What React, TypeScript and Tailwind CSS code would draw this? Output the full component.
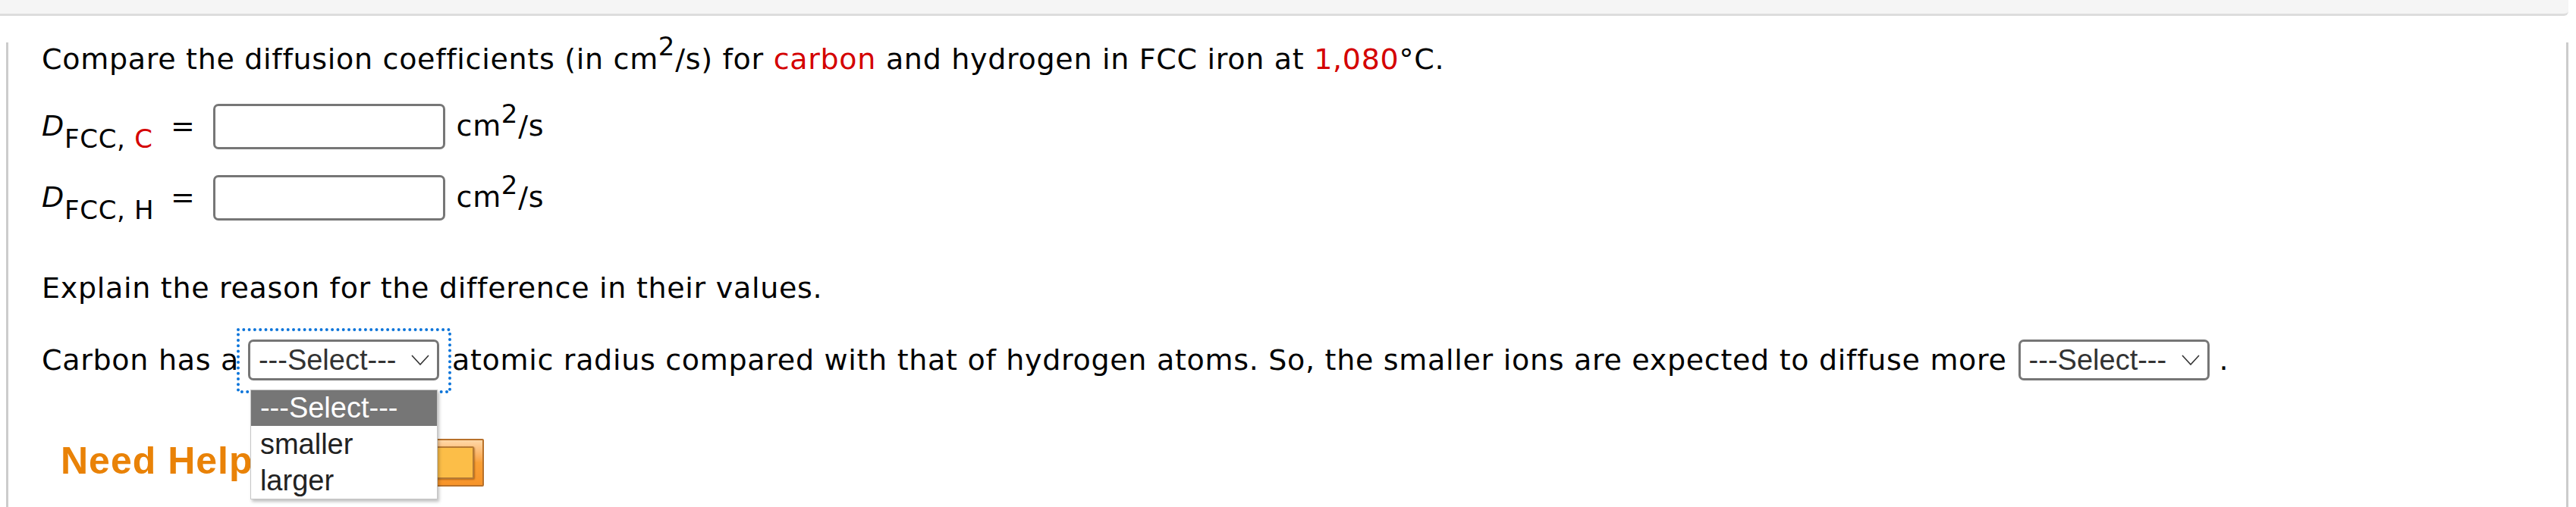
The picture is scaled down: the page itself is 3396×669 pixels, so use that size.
import React from 'react';

const red = 'text-[#d40000]';

function Chevron() {
  return (
    <svg width="24" height="14" viewBox="0 0 24 14" fill="none" stroke="#333" strokeWidth={1.6}>
      <path d="M1 1 L12 13 L23 1" />
    </svg>
  );
}

function FakeSelect() {
  return (
    <div className="flex items-center justify-between w-[252px] h-[54px] border-[3px] border-[#767676] rounded-[7px] bg-white pl-[11px] pr-[10px] font-['Liberation_Sans',Arial,sans-serif] tracking-normal text-[38px] leading-none text-[#333]">
      <span>---Select---</span>
      <Chevron />
    </div>
  );
}

function Row({ label, sub }: { label: string; sub: React.ReactNode }) {
  return (
    <div className="flex items-start h-[60px] whitespace-nowrap">
      <div className="w-[170px] mt-[7px] leading-[44px]">
        <i>{label}</i>
        <span className="text-[34px] leading-[0] align-[-16px]">{sub}</span>
      </div>
      <div className="mt-[7px] leading-[44px]">=</div>
      <div className="ml-[23px] w-[306px] h-[60px] border-[3px] border-[#767676] rounded-[7px] bg-white" />
      <div className="ml-[15px] mt-[7px] leading-[44px]">
        cm<span className="text-[34px] leading-[0] align-[17px]">2</span>/s
      </div>
    </div>
  );
}

export default function App() {
  return (
    <div className="relative w-[3396px] h-[669px] bg-white overflow-hidden font-['DejaVu_Sans',Verdana,sans-serif] text-[38px] tracking-[0.7px] text-black">
      {/* top strip */}
      <div className="h-[21px] w-[3386px] bg-[#f5f5f5] border-b-[3px] border-[#dddddd] rounded-br-[6px]" />

      {/* question frame */}
      <div className="ml-[8px] w-[3378px] h-[648px] border-x-[3px] border-[#cccccc] pl-[44px]">
        <div className="mt-[35px] leading-[44px] whitespace-nowrap">
          Compare the diffusion coefficients (in cm
          <span className="text-[34px] leading-[0] align-[18px]">2</span>/s) for{' '}
          <span className={red}>carbon</span> and hydrogen in FCC iron at{' '}
          <span className={red}>1,080</span>°C.
        </div>

        <div className="mt-[37px]">
          <Row
            label="D"
            sub={
              <>
                FCC, <span className={red}>C</span>
              </>
            }
          />
        </div>
        <div className="mt-[34px]">
          <Row label="D" sub="FCC, H" />
        </div>

        <div className="mt-[67px] leading-[44px]">Explain the reason for the difference in their values.</div>

        {/* sentence with dropdowns */}
        <div className="mt-[31px] flex items-start whitespace-pre">
          <span className="mt-[20px] leading-[44px]">Carbon has a</span>
          <div className="relative ml-[-3px] w-[283px] h-[86px] pt-[15px] pl-[15px]">
            {/* focus ring */}
            <svg className="absolute inset-0" width="283" height="86" fill="none">
              <rect
                x="2"
                y="2"
                width="279"
                height="82"
                stroke="#0a74da"
                strokeWidth={4}
                strokeLinecap="round"
                strokeDasharray="0 7.3"
              />
            </svg>
            <div className="relative">
              <FakeSelect />
            </div>
            {/* open option list */}
            <div className="absolute left-[18px] top-[81px] z-10 w-[247px] bg-white border border-[#c6c6c6] shadow-[2px_3px_4px_rgba(0,0,0,0.25)] font-['Liberation_Sans',Arial,sans-serif] tracking-normal text-[38px] text-[#222]">
              <div className="h-[47px] pl-[12px] leading-[46px] bg-[#767676] text-white">---Select---</div>
              <div className="h-[48px] pl-[12px] leading-[48px]">smaller</div>
              <div className="h-[48px] pl-[12px] leading-[48px]">larger</div>
            </div>
          </div>
          <span className="ml-[1px] mt-[20px] leading-[44px]">
            atomic radius compared with that of hydrogen atoms. So, the smaller ions are expected to diffuse more
          </span>
          <div className="ml-[15px] mt-[15px]">
            <FakeSelect />
          </div>
          <span className="mt-[20px] leading-[44px]"> .</span>
        </div>

        {/* help row */}
        <div className="mt-[60px] flex items-start">
          <div className="ml-[25px] w-[260px] mt-[5px] whitespace-nowrap leading-[48px] font-['Liberation_Sans',Arial,sans-serif] font-bold text-[50px] tracking-[1px] text-[#e98207] blur-[0.6px]">
            Need Help
          </div>
          <div className="w-[298px] h-[63px] border-2 border-[#b8712a] rounded-[2px] bg-gradient-to-b from-[#ffd7a6] via-[#f9a035] to-[#f7942a] py-[8px] pl-[10px] pr-[11px]">
            <div className="h-full border-2 border-[#b67a34] rounded-[2px] bg-[#fcbe48] shadow-[1px_1px_2px_rgba(120,60,0,0.5)]" />
          </div>
        </div>
      </div>
    </div>
  );
}
